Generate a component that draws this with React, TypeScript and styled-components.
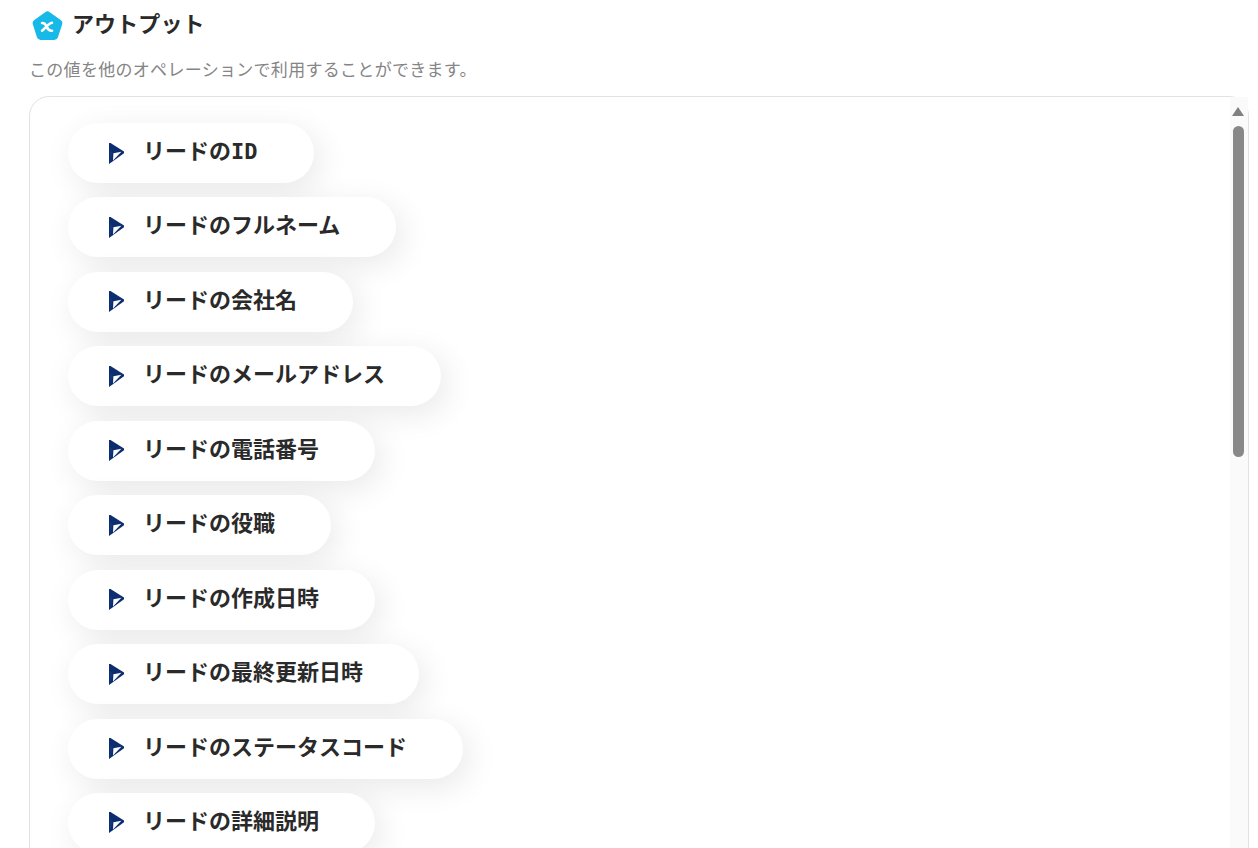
import { createGlobalStyle, styled } from 'styled-components'

const GlobalStyle = createGlobalStyle`
  html, body {
    margin: 0;
    height: 100%;
    background: #fff;
  }
  body {
    font-family: "Noto Sans CJK JP", "Noto Sans", sans-serif;
    color: #2a2a2a;
  }
`

const outputs = [
  'リードのID',
  'リードのフルネーム',
  'リードの会社名',
  'リードのメールアドレス',
  'リードの電話番号',
  'リードの役職',
  'リードの作成日時',
  'リードの最終更新日時',
  'リードのステータスコード',
  'リードの詳細説明',
]

const LogoIcon = () => (
  <LogoSvg viewBox="0 0 32 31" aria-hidden="true">
    <path
      d="M13.6 1.2a4 4 0 0 1 4.8 0l11.2 8.2a4 4 0 0 1 1.5 4.5l-4.3 13.3a4 4 0 0 1-3.8 2.8H8.9a4 4 0 0 1-3.8-2.8L.9 13.9a4 4 0 0 1 1.5-4.5z"
      fill="#17b9e8"
    />
    <path
      d="M10.4 12.4c3-.4 3.8 1.6 4.9 4s2 4.4 5.4 4M20.6 12.2c-3.6.4-6.6 5.4-10.2 8.2"
      fill="none"
      stroke="#fff"
      strokeWidth="2.7"
      strokeLinecap="round"
    />
  </LogoSvg>
)

const DynamicsIcon = () => (
  <DynamicsSvg viewBox="0 0 15 21" aria-hidden="true">
    <path d="M0 0h1.5L15 8.4v1.8L0 21z" fill="#0c2d6e" />
    <path d="M4.4 10.2l8-1.4-8.4 8.8z" fill="#fff" />
    <path d="M1.2 6.4l2.4 3.8-2.4 8.4z" fill="#14387f" />
  </DynamicsSvg>
)

export default function App() {
  return (
    <Page>
      <GlobalStyle />
      <Header>
        <LogoIcon />
        <Title>アウトプット</Title>
      </Header>
      <Description>この値を他のオペレーションで利用することができます。</Description>
      <ListFrame>
        <List>
          {outputs.map((label) => (
            <Pill key={label}>
              <DynamicsIcon />
              <PillLabel>{label}</PillLabel>
            </Pill>
          ))}
        </List>
        <ScrollRail>
          <ScrollArrow />
          <ScrollThumb />
        </ScrollRail>
      </ListFrame>
    </Page>
  )
}

const Page = styled.div`
  height: 100vh;
  box-sizing: border-box;
  overflow: hidden;
  padding: 10px 9px 0 29px;
`

const Header = styled.div`
  display: flex;
  align-items: center;
  height: 31px;
  padding-left: 3px;
  gap: 9px;
`

const LogoSvg = styled.svg`
  width: 31px;
  height: 30px;
  flex: none;
`

const Title = styled.h2`
  margin: 0;
  padding-bottom: 8px;
  font-size: 22px;
  font-weight: 700;
  line-height: 28px;
  letter-spacing: 0.1px;
  color: #2a2a2a;
`

const Description = styled.p`
  margin: 16px 0 0 0;
  font-size: 17px;
  line-height: 24px;
  letter-spacing: 0.3px;
  color: #858585;
`

const ListFrame = styled.div`
  position: relative;
  margin-top: 15px;
  height: 800px;
  box-sizing: border-box;
  border: 1px solid #e2e2e2;
  border-radius: 20px;
`

const List = styled.div`
  display: flex;
  flex-direction: column;
  align-items: flex-start;
  gap: 14.45px;
  padding: 26px 0 0 38px;
`

const Pill = styled.div`
  display: flex;
  align-items: center;
  height: 60px;
  box-sizing: border-box;
  padding: 0 56px 0 41px;
  gap: 20px;
  background: #fff;
  border-radius: 30px;
  box-shadow: 6px 8px 32px rgba(0, 0, 0, 0.09);
`

const DynamicsSvg = styled.svg`
  width: 15px;
  height: 21px;
  flex: none;
`

const PillLabel = styled.span`
  margin-left: -1px;
  padding-bottom: 2px;
  font-family: "DejaVu Sans Mono", "Noto Sans CJK JP", sans-serif;
  font-size: 22px;
  font-weight: 700;
  line-height: 30px;
  white-space: nowrap;
  color: #2a2a2a;
`

const ScrollRail = styled.div`
  position: absolute;
  top: 0;
  right: 0;
  bottom: 0;
  width: 18px;
  display: flex;
  flex-direction: column;
  align-items: flex-start;
  padding: 10px 0 0 3px;
  box-sizing: border-box;
  background: #fafafa;
`

const ScrollArrow = styled.div`
  width: 0;
  height: 0;
  margin: 0 0 10px -1px;
  border-left: 6.5px solid transparent;
  border-right: 6.5px solid transparent;
  border-bottom: 9px solid #808080;
`

const ScrollThumb = styled.div`
  width: 11px;
  height: 331px;
  background: #888;
  border-radius: 6px;
`
